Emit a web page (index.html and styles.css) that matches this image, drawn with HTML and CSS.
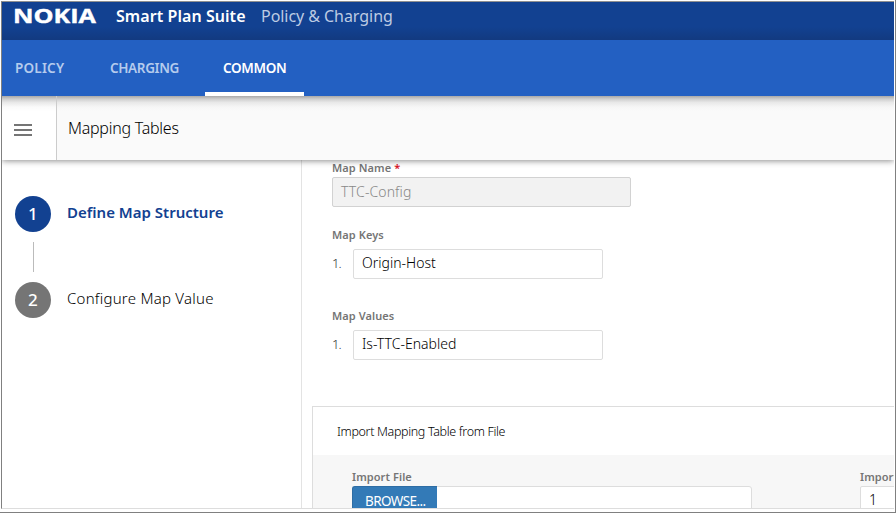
FILE: index.html
```html
<!DOCTYPE html>
<html lang="en">
<head>
<meta charset="utf-8">
<title>Smart Plan Suite</title>
<link rel="stylesheet" href="styles.css">
</head>
<body>
<div class="window">
  <div class="app">
    <header class="brandbar">
      <svg class="logo" width="84" height="16" viewBox="0 0 84 16" role="img" aria-label="Nokia"><text x="-1" y="14" textLength="83" lengthAdjust="spacingAndGlyphs">NOKIA</text></svg>
      <span class="suite">Smart Plan Suite</span>
      <span class="product">Policy &amp; Charging</span>
    </header>
    <nav class="tabs">
      <a class="tab tab-policy"><span>POLICY</span></a>
      <a class="tab tab-charging"><span>CHARGING</span></a>
      <a class="tab tab-common active"><span>COMMON</span></a>
    </nav>
    <div class="titlebar">
      <button class="menu" aria-label="Menu"><i></i><i></i><i></i></button>
      <h1 class="title">Mapping Tables</h1>
    </div>
    <div class="body">
      <aside class="steps">
        <div class="step current"><span class="num">1</span><span class="step-name">Define Map Structure</span></div>
        <div class="connector"></div>
        <div class="step"><span class="num">2</span><span class="step-name">Configure Map Value</span></div>
      </aside>
      <main class="content">
        <section class="form">
          <label class="label">Map Name <span class="req">*</span></label>
          <div class="input disabled">TTC-Config</div>
          <label class="label keys-label">Map Keys</label>
          <div class="row"><span class="index">1.</span><div class="input">Origin-Host</div></div>
          <label class="label values-label">Map Values</label>
          <div class="row"><span class="index">1.</span><div class="input">Is-TTC-Enabled</div></div>
        </section>
        <section class="panel">
          <h2 class="panel-title">Import Mapping Table from File</h2>
          <div class="panel-body">
            <div class="file-field">
              <label class="label">Import File</label>
              <div class="file"><button class="browse">BROWSE...</button></div>
            </div>
            <div class="mode-field">
              <label class="label">Import</label>
              <div class="input mode">1</div>
            </div>
          </div>
        </section>
      </main>
    </div>
  </div>
</div>
</body>
</html>
```
FILE: styles.css
```css
* { box-sizing: border-box; }
body {
  margin: 0;
  background: #fff;
  font-family: "Noto Sans", "Open Sans", sans-serif;
  color: #000;
  overflow: hidden;
}
.window {
  width: 896px;
  height: 513px;
  padding: 1px 0 0 1px;
  border-right: 1px solid #808080;
  border-bottom: 1px solid #808080;
}
.app {
  height: 508px;
  width: 893px;
  border-left: 1px solid #808080;
  border-top: 1px solid #909090;
  border-bottom: 1px solid #ddd;
  display: flex;
  flex-direction: column;
  overflow: hidden;
  white-space: nowrap;
}
.brandbar {
  flex: none;
  height: 38px;
  background: linear-gradient(#124191 65%, #123a80);
  display: flex;
  align-items: flex-start;
  color: #fff;
  line-height: 24px;
  padding: 2px 0 0 12px;
}
.logo { margin: 5px 18px 0 0; overflow: visible; }
.logo text {
  font-family: "Open Sans", sans-serif;
  font-weight: 700;
  font-size: 19px;
  fill: #fff;
  stroke: #fff;
  stroke-width: .4px;
}
.suite { font-size: 16px; font-weight: 600; width: 145px; letter-spacing: .06px; }
.product { font-size: 16px; color: #bdcbe3; letter-spacing: -.05px; }
.tabs {
  flex: none;
  height: 56px;
  background: #2360c2;
  display: flex;
  font-size: 13.5px;
  font-weight: 600;
  color: #b5cbed;
  letter-spacing: -.35px;
}
.tab {
  display: flex;
  align-items: center;
  padding-left: 13px;
  border-bottom: 4px solid transparent;
  padding-top: 4px;
}
.tab-policy { width: 94px; letter-spacing: .2px; }
.tab-charging { width: 109px; padding-left: 14px; }
.tab-common { width: 99px; padding-left: 18px; }
.active { color: #fff; border-color: #fff; }
.titlebar {
  flex: none;
  height: 64px;
  display: flex;
  position: relative;
  background: linear-gradient(#a8a8a8, #d0d0d0 5%, #e8e8e8 10%, #f6f6f6 17%, #fafafa 24%);
  box-shadow: 0 1px 6px rgba(0, 0, 0, .45);
  clip-path: inset(0 0 -12px 0);
}
.menu {
  width: 55px;
  border: 0;
  border-right: 1px solid #ccc;
  background: linear-gradient(#a8a8a8, #d0d0d0 5%, #e8e8e8 10%, #fafafa 17%, #fff 24%);
  padding: 28px 0 0 12px;
  display: flex;
  flex-direction: column;
  gap: 3px;
}
.menu i { width: 18px; height: 2px; background: #757575; }
.title { margin: 0 0 0 11px; font-size: 16px; font-weight: 300; line-height: 65px; letter-spacing: -.25px; }
.body { flex: 1; display: flex; min-height: 0; }
.steps {
  width: 300px;
  flex: none;
  border-right: 1px solid #e3e3e3;
  padding: 36px 0 0 13px;
  font-size: 15px;
}
.step { display: flex; align-items: center; gap: 16px; height: 36px; font-weight: 300; letter-spacing: .24px; }
.num {
  width: 36px;
  height: 36px;
  border-radius: 50%;
  background: #757575;
  color: #fff;
  font-size: 17px;
  font-weight: 500;
  line-height: 36px;
  text-align: center;
}
.step-name { line-height: 24px; margin-top: -5px; }
.current .num { background: #124191; }
.current .step-name { color: #124191; font-weight: 600; letter-spacing: 0; }
.connector { width: 1px; height: 30px; margin: 10px 0 10px 18px; background: #bbb; }
.content { flex: 1; min-width: 0; overflow: hidden; padding-left: 10px; }
.form { padding-left: 20px; height: 246px; }
.label { display: block; font-size: 11px; font-weight: 600; line-height: 16px; height: 16px; color: #757575; letter-spacing: .08px; }
.req { color: #d9121f; }
.input {
  height: 30px;
  border: 1px solid #ddd;
  border-radius: 2px;
  background: #fff;
  padding-left: 8px;
  line-height: 26px;
  font-size: 14px;
  font-weight: 300;
}
.disabled { width: 299px; margin-top: 1px; background: #f2f2f2; border-color: #d2d2d2; color: #888; line-height: 27px; letter-spacing: .1px; }
.keys-label { margin-top: 20px; }
.row { display: flex; margin-top: 6px; }
.row .input { width: 250px; }
.index { width: 21px; font-size: 13px; font-weight: 300; line-height: 28px; color: #333; letter-spacing: -.9px; }
.values-label { margin-top: 29px; }
.panel { border: 1px solid #ddd; border-right: 0; height: 200px; }
.panel-title { margin: 0; height: 48px; padding-left: 24px; font-size: 12.5px; font-weight: 300; line-height: 49px; letter-spacing: -.34px; }
.panel-body { height: 151px; background: #f7f7f7; display: flex; padding: 14px 0 0 39px; }
.file-field { width: 508px; flex: none; }
.file { width: 400px; height: 32px; border: 1px solid #ddd; border-radius: 3px; background: #fff; margin-top: 1px; }
.browse {
  display: block;
  width: 85px;
  height: 32px;
  margin: -1px 0 0 -1px;
  border: 1px solid #2e6da4;
  border-right: 0;
  border-radius: 3px 0 0 3px;
  background: #337ab7;
  color: #fff;
  font: 400 13.5px/28px "Noto Sans", sans-serif;
  letter-spacing: -.6px;
  padding: 0 0 2px 12px;
  text-align: left;
}
.mode { width: 100px; margin-top: 1px; }
```
